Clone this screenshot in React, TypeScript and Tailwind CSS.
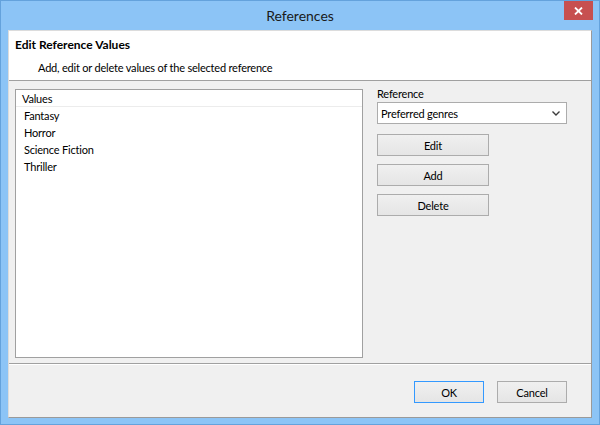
import React from "react";

function Btn({ label, primary }: { label: string; primary?: boolean }) {
  return (
    <div
      className={
        "flex items-center justify-center h-[22px] text-[11px] tracking-[-0.2px] leading-none text-black bg-gradient-to-b from-[#f0f0f0] to-[#e5e5e5] border " +
        (primary ? "border-[#3399ff]" : "border-[#acacac]")
      }
    >
      {label}
    </div>
  );
}

export default function App() {
  const items = ["Fantasy", "Horror", "Science Fiction", "Thriller"];
  return (
    <div className="w-[600px] h-[425px] bg-[#8cc4f6] border border-[#64a2dc] flex flex-col font-['Lato','Liberation_Sans',sans-serif] text-black select-none">
      {/* Title bar */}
      <div className="relative h-[29px] shrink-0 flex items-center justify-center">
        <span className="text-[14px] leading-none text-[#1a1a1a] mt-[1px]">References</span>
        <div className="absolute right-[6px] top-0 w-[29px] h-[19px] bg-[#c75050] flex items-center justify-center">
          <svg width="9" height="8" viewBox="0 0 9 8">
            <path d="M1 0.5 L8 7.5 M8 0.5 L1 7.5" stroke="#ffffff" strokeWidth="1.8" />
          </svg>
        </div>
      </div>

      {/* Client area */}
      <div className="mx-[7px] mb-[6px] flex-1 flex flex-col border-l border-t border-l-[#dcdcdc] border-t-[#dcdcdc] border-r border-b border-r-[#9a9a9a] border-b-[#9a9a9a] bg-[#f0f0f0] min-h-0">
        {/* Header */}
        <div className="h-[50px] shrink-0 bg-white border-b border-[#a0a0a0] pl-[6px] pt-[6px]">
          <div className="text-[12px] leading-[16px] font-bold">Edit Reference Values</div>
          <div className="text-[11px] tracking-[-0.2px] leading-[16px] mt-[7px] pl-[23px]">
            Add, edit or delete values of the selected reference
          </div>
        </div>

        {/* Body */}
        <div className="flex-1 flex items-start pl-[6px] border-b border-[#a0a0a0] min-h-0">
          <div className="mt-[8px] w-[348px] h-[269px] bg-white border border-[#a0a0a0] flex flex-col">
            <div className="h-[17px] border-b border-[#ececec] pl-[6px] pt-[2px] text-[11px] tracking-[-0.2px] leading-[14px]">
              Values
            </div>
            {items.map((it) => (
              <div key={it} className="h-[17px] pl-[8px] text-[11px] tracking-[-0.2px] leading-[17px]">
                {it}
              </div>
            ))}
          </div>

          <div className="ml-[14px] mt-[5px] flex flex-col">
            <div className="text-[11px] tracking-[-0.2px] leading-[15px]">Reference</div>
            <div className="mt-[1px] w-[190px] h-[22px] bg-white border border-[#acacac] flex items-center justify-between pl-[3px] pr-[6px]">
              <span className="text-[11px] tracking-[-0.2px] leading-none">Preferred genres</span>
              <svg width="8" height="5" viewBox="0 0 8 5">
                <path d="M0.5 0.5 L4 4 L7.5 0.5" stroke="#3c3c3c" strokeWidth="1.4" fill="none" />
              </svg>
            </div>
            <div className="mt-[10px] w-[112px] flex flex-col gap-[8px]">
              <Btn label="Edit" />
              <Btn label="Add" />
              <Btn label="Delete" />
            </div>
          </div>
        </div>

        {/* Footer */}
        <div className="h-[53px] shrink-0 border-t border-white flex justify-end items-start pt-[16px] pr-[24px] gap-[13px]">
          <div className="w-[70px]">
            <Btn label="OK" primary />
          </div>
          <div className="w-[70px]">
            <Btn label="Cancel" />
          </div>
        </div>
      </div>
    </div>
  );
}
